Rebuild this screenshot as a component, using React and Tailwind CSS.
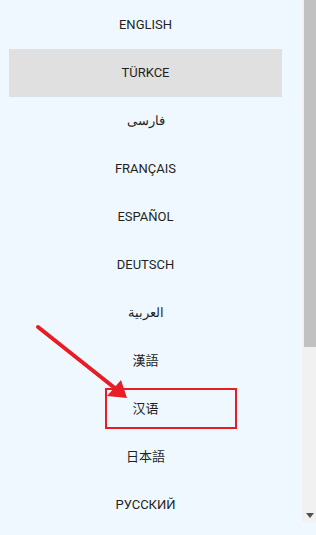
const languages = [
  'ENGLISH',
  'TÜRKCE',
  'فارسی',
  'FRANÇAIS',
  'ESPAÑOL',
  'DEUTSCH',
  'العربية',
  '漢語',
  '汉语',
  '日本語',
  'РУССКИЙ',
]

export default function App() {
  const selected = 'TÜRKCE'

  return (
    <div className="relative h-[535px] w-[316px] overflow-hidden bg-[#f0f8ff] font-['Roboto','Noto_Sans_CJK_SC',sans-serif] text-[13px] text-[#1f1f1f]">
      <div className="flex">
        {/* Language list */}
        <div className="flex-1 pt-px">
          {languages.map((lang) => (
            <div
              key={lang}
              className={`ml-[9px] flex h-[48px] w-[273px] items-center justify-center ${
                lang === selected ? 'bg-[#e0e0e0]' : ''
              }`}
            >
              {lang}
            </div>
          ))}
        </div>

        {/* Scrollbar */}
        <div className="flex h-[522px] w-[14px] flex-col bg-[#f1f1f1]">
          <div className="ml-[2px] h-[347px] bg-[#c1c1c1]" />
          <div className="flex-1" />
          <div className="flex h-[14px] items-center justify-center pl-[2px]">
            <svg width="8" height="5" viewBox="0 0 8 5">
              <path d="M0 0H8L4 5Z" fill="#505050" />
            </svg>
          </div>
        </div>
      </div>

      {/* Annotation: highlight box */}
      <div className="absolute left-[105px] top-[388px] h-[41px] w-[132px] border-2 border-[#e81c24]" />

      {/* Annotation: arrow */}
      <svg className="absolute left-0 top-0" width="316" height="535" viewBox="0 0 316 535">
        <line x1="38" y1="327" x2="116" y2="389" stroke="#e81c24" strokeWidth="4" strokeLinecap="round" />
        <path d="M127 398 L107 396 L121 380 Z" fill="#e81c24" />
      </svg>
    </div>
  )
}
